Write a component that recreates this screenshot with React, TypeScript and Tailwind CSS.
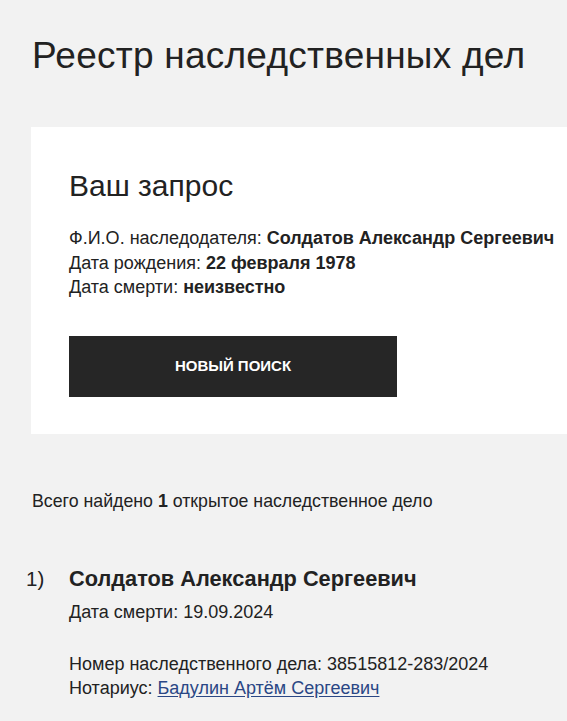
import React from "react";

export default function App() {
  return (
    <div className="min-h-[721px] bg-[#f2f2f2] text-[#222] overflow-hidden" style={{ fontFamily: '"Liberation Sans", Arial, sans-serif' }}>
      <h1 className="pl-[32px] pt-[34px] text-[37px] leading-[44px] font-normal tracking-[0.25px]">Реестр наследственных дел</h1>
      <div className="ml-[31px] mt-[49px] bg-white pl-[38px] pt-[41px] pb-[37px] w-[600px]">
        <h2 className="text-[30px] leading-[36px]">Ваш запрос</h2>
        <div className="mt-[22px] text-[18px] leading-[24.5px]">
          <div>Ф.И.О. наследодателя: <b>Солдатов Александр Сергеевич</b></div>
          <div>Дата рождения: <b>22 февраля 1978</b></div>
          <div>Дата смерти: <b>неизвестно</b></div>
        </div>
        <button className="mt-[36px] w-[328px] h-[61px] bg-[#262626] text-white font-bold text-[15px] uppercase">Новый поиск</button>
      </div>
      <div className="pl-[32px] mt-[55px] text-[17.75px] leading-[24px]">Всего найдено <b>1</b> открытое наследственное дело</div>
      <div className="flex mt-[52px]">
        <div className="w-[69px] pl-[26px] text-[20.5px] leading-[28px]">1)</div>
        <div>
          <div className="text-[21.75px] leading-[28px] font-bold">Солдатов Александр Сергеевич</div>
          <div className="mt-[7px] text-[18px] leading-[24px]">Дата смерти: 19.09.2024</div>
          <div className="mt-[28px] text-[18px] leading-[24.5px]">
            <div>Номер наследственного дела: 38515812-283/2024</div>
            <div>Нотариус: <a href="#" className="text-[#2a4785] underline underline-offset-2">Бадулин Артём Сергеевич</a></div>
          </div>
        </div>
      </div>
    </div>
  );
}
